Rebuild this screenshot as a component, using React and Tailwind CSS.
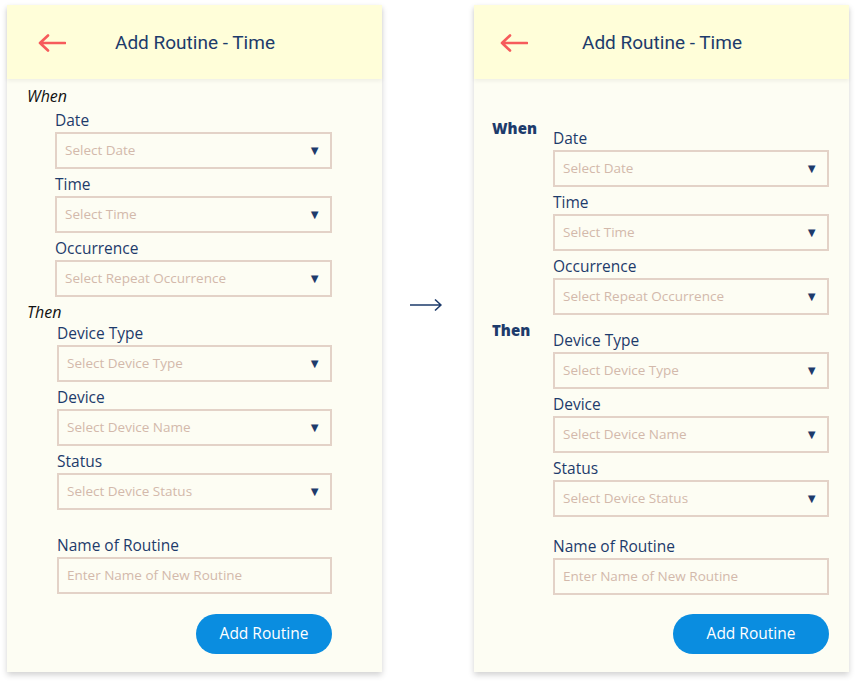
import { Fragment } from "react";

const whenFields = [
    { label: "Date", placeholder: "Select Date" },
    { label: "Time", placeholder: "Select Time" },
    { label: "Occurrence", placeholder: "Select Repeat Occurrence" },
];

const thenFields = [
    { label: "Device Type", placeholder: "Select Device Type" },
    { label: "Device", placeholder: "Select Device Name" },
    { label: "Status", placeholder: "Select Device Status" },
];

const labelFont = { fontFamily: '"Open Sans", "Noto Sans", sans-serif' };

function BackArrow() {
    return (
        <svg width="28" height="18" viewBox="0 0 28 18" fill="none">
            <path
                d="M27 9H2M10 1.5L2 9l8 7.5"
                stroke="#f65b5b"
                strokeWidth="2.6"
                strokeLinecap="round"
                strokeLinejoin="round"
            />
        </svg>
    );
}

function Header({ arrowLeft }) {
    return (
        <div className="relative z-10 h-[74px] bg-[#fffed9] shadow-[0_2px_4px_rgba(0,0,0,0.06)] flex items-center">
            <div className={`${arrowLeft} w-[108px] shrink-0 pt-[2px]`}>
                <BackArrow />
            </div>
            <div
                className="text-[19px] text-[#1d3b6b] pt-[3px]"
                style={{ fontFamily: 'Roboto, "Open Sans", sans-serif' }}
            >
                Add Routine - Time
            </div>
        </div>
    );
}

function Select({ field, input }) {
    return (
        <>
            <div className="h-5 leading-5 text-[15.5px] text-[#1d3b6b]" style={labelFont}>
                {field.label}
            </div>
            <div className="mt-[2px] h-[37px] border-2 border-[#e3d2c7] flex items-center justify-between pl-[8px] pr-[9px]">
                <span className="text-[13.5px] text-[#d3b9ab]" style={labelFont}>
                    {field.placeholder}
                </span>
                {!input && <span className="text-[13px] text-[#1d3b6b] leading-none">▼</span>}
            </div>
        </>
    );
}

function FieldList({ fields }) {
    return (
        <div className="flex flex-col gap-[5px]">
            {fields.map((f) => (
                <div key={f.label}>
                    <Select field={f} />
                </div>
            ))}
        </div>
    );
}

function AddButton({ width }) {
    return (
        <div className="flex justify-end">
            <button
                className={`${width} h-10 rounded-full bg-[#0a8de0] text-white text-[15.5px]`}
                style={labelFont}
            >
                Add Routine
            </button>
        </div>
    );
}

function LeftCard() {
    return (
        <div className="w-[375px] h-[667px] bg-[#fdfdf3] shadow-[0_3px_6px_rgba(0,0,0,0.18)] flex flex-col">
            <Header arrowLeft="pl-[31px]" />
            <div className="pt-2 pl-5 pr-[50px]">
                <div className="h-[18px] leading-[18px] italic text-[16px] text-[#111]" style={labelFont}>
                    When
                </div>
                <div className="pl-[28px] mt-[5px]">
                    <FieldList fields={whenFields} />
                </div>
                <div className="h-[18px] leading-[18px] italic text-[16px] text-[#111] mt-[6px]" style={labelFont}>
                    Then
                </div>
                <div className="pl-[30px] mt-[2px]">
                    <FieldList fields={thenFields} />
                    <div className="mt-[25px]">
                        <Select field={{ label: "Name of Routine", placeholder: "Enter Name of New Routine" }} input />
                    </div>
                    <div className="mt-5">
                        <AddButton width="w-[136px]" />
                    </div>
                </div>
            </div>
        </div>
    );
}

function RightCard() {
    const sections = [
        { title: "When", fields: whenFields, mt: "mt-[39px]" },
        { title: "Then", fields: thenFields, mt: "mt-[5px]" },
    ];
    return (
        <div className="w-[375px] h-[667px] bg-[#fdfdf3] shadow-[0_3px_6px_rgba(0,0,0,0.18)] flex flex-col">
            <Header arrowLeft="pl-[26px]" />
            <div className="pl-[18px] pr-5">
                {sections.map((s) => (
                    <div key={s.title} className={`${s.mt} flex`}>
                        <div
                            className="w-[61px] shrink-0 h-5 leading-5 font-extrabold text-[15px] text-[#1d3b6b]"
                            style={labelFont}
                        >
                            {s.title}
                        </div>
                        <div className="flex-1 mt-[10px]">
                            <FieldList fields={s.fields} />
                        </div>
                    </div>
                ))}
                <div className="ml-[61px] mt-[19px]">
                    <Select field={{ label: "Name of Routine", placeholder: "Enter Name of New Routine" }} input />
                    <div className="mt-[19px]">
                        <AddButton width="w-[156px]" />
                    </div>
                </div>
            </div>
        </div>
    );
}

export default function App() {
    return (
        <div className="w-[857px] h-[684px] bg-white flex pl-[7px] pt-[5px]">
            <LeftCard />
            <div className="w-[92px] flex justify-center pt-[293px] pr-[4px]">
                <svg width="34" height="14" viewBox="0 0 34 14" fill="none">
                    <path
                        d="M1 7h31M26 1.5L32 7l-6 5.5"
                        stroke="#1d3b6b"
                        strokeWidth="1.6"
                        strokeLinejoin="round"
                    />
                </svg>
            </div>
            <RightCard />
        </div>
    );
}
